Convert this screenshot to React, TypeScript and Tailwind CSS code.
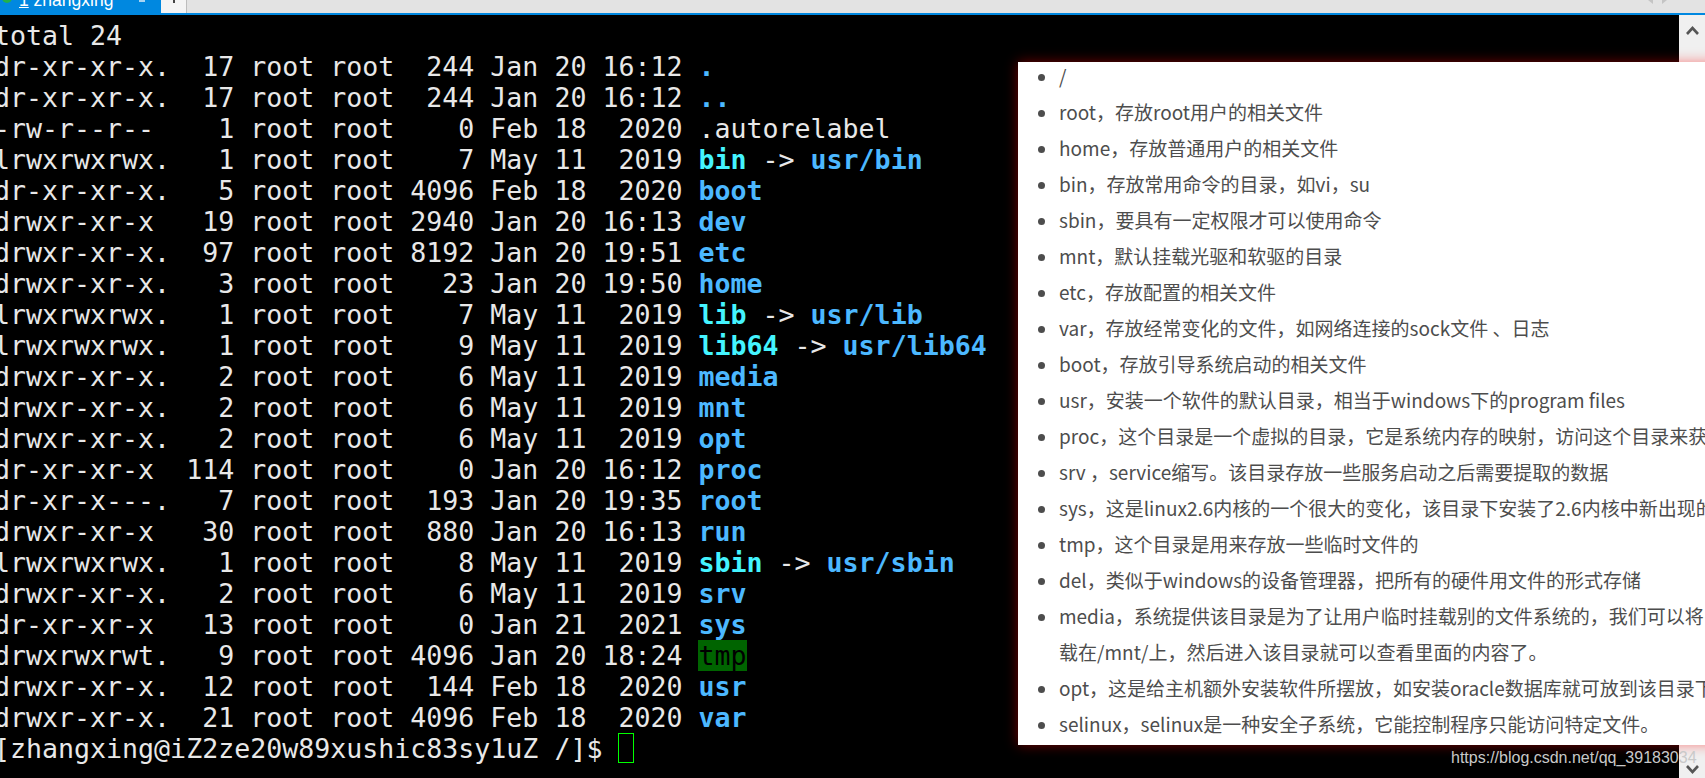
const rows: [string, string, string, string][] = [
  ['dr-xr-xr-x.  17 root root  244 Jan 20 16:12 ', '.', '', ''],
  ['dr-xr-xr-x.  17 root root  244 Jan 20 16:12 ', '..', '', ''],
  ['-rw-r--r--    1 root root    0 Feb 18  2020 ', '', '.autorelabel', ''],
  ['lrwxrwxrwx.   1 root root    7 May 11  2019 ', 'bin', ' -> ', 'usr/bin'],
  ['dr-xr-xr-x.   5 root root 4096 Feb 18  2020 ', 'boot', '', ''],
  ['drwxr-xr-x   19 root root 2940 Jan 20 16:13 ', 'dev', '', ''],
  ['drwxr-xr-x.  97 root root 8192 Jan 20 19:51 ', 'etc', '', ''],
  ['drwxr-xr-x.   3 root root   23 Jan 20 19:50 ', 'home', '', ''],
  ['lrwxrwxrwx.   1 root root    7 May 11  2019 ', 'lib', ' -> ', 'usr/lib'],
  ['lrwxrwxrwx.   1 root root    9 May 11  2019 ', 'lib64', ' -> ', 'usr/lib64'],
  ['drwxr-xr-x.   2 root root    6 May 11  2019 ', 'media', '', ''],
  ['drwxr-xr-x.   2 root root    6 May 11  2019 ', 'mnt', '', ''],
  ['drwxr-xr-x.   2 root root    6 May 11  2019 ', 'opt', '', ''],
  ['dr-xr-xr-x  114 root root    0 Jan 20 16:12 ', 'proc', '', ''],
  ['dr-xr-x---.   7 root root  193 Jan 20 19:35 ', 'root', '', ''],
  ['drwxr-xr-x   30 root root  880 Jan 20 16:13 ', 'run', '', ''],
  ['lrwxrwxrwx.   1 root root    8 May 11  2019 ', 'sbin', ' -> ', 'usr/sbin'],
  ['drwxr-xr-x.   2 root root    6 May 11  2019 ', 'srv', '', ''],
  ['dr-xr-xr-x   13 root root    0 Jan 21  2021 ', 'sys', '', ''],
]

const tail: [string, string][] = [
  ['drwxr-xr-x.  12 root root  144 Feb 18  2020 ', 'usr'],
  ['drwxr-xr-x.  21 root root 4096 Feb 18  2020 ', 'var'],
]

const notes = [
  '/',
  'root，存放root用户的相关文件',
  'home，存放普通用户的相关文件',
  'bin，存放常用命令的目录，如vi，su',
  'sbin，要具有一定权限才可以使用命令',
  'mnt，默认挂载光驱和软驱的目录',
  'etc，存放配置的相关文件',
  'var，存放经常变化的文件，如网络连接的sock文件 、日志',
  'boot，存放引导系统启动的相关文件',
  'usr，安装一个软件的默认目录，相当于windows下的program files',
  'proc，这个目录是一个虚拟的目录，它是系统内存的映射，访问这个目录来获',
  'srv ，service缩写。该目录存放一些服务启动之后需要提取的数据',
  'sys，这是linux2.6内核的一个很大的变化，该目录下安装了2.6内核中新出现的',
  'tmp，这个目录是用来存放一些临时文件的',
  'del，类似于windows的设备管理器，把所有的硬件用文件的形式存储',
  'media，系统提供该目录是为了让用户临时挂载别的文件系统的，我们可以将',
  '载在/mnt/上，然后进入该目录就可以查看里面的内容了。',
  'opt，这是给主机额外安装软件所摆放，如安装oracle数据库就可放到该目录下',
  'selinux，selinux是一种安全子系统，它能控制程序只能访问特定文件。',
]

export default function App() {
  return (
    <div className="relative h-[778px] w-[1705px] overflow-hidden bg-black">
      {/* tab bar */}
      <div className="flex h-[13px] items-start overflow-hidden bg-[#e3e3e3]">
        <div className="flex h-[13px] w-[161px] items-start overflow-hidden bg-[#0088e0] pl-[2px] text-white">
          <span className="mt-[-7px] h-[10px] w-[10px] shrink-0 rounded-full bg-[#22b14c]" />
          <span className="ml-[7px] mt-[-10px] whitespace-nowrap font-['Liberation_Sans',sans-serif] text-[17.5px] leading-[20px]">
            <span className="underline">1</span> zhangxing
          </span>
          <span className="ml-[26px] mt-[-3px] h-[5px] w-[6px] bg-[#a8d4f2]" />
        </div>
        <div className="flex h-[13px] w-[26px] justify-center border-r border-[#bdbdbd] bg-[#f4f4f4]">
          <span className="h-[3px] w-[2px] bg-[#444]" />
        </div>
        <div className="ml-auto mr-[38px] flex gap-[9px] text-[#c4c4c4]">
          <svg width="5" height="4" viewBox="0 0 5 4" fill="currentColor">
            <path d="M0 0h5v4z" />
          </svg>
          <svg width="5" height="4" viewBox="0 0 5 4" fill="currentColor">
            <path d="M0 0h5L0 4z" />
          </svg>
        </div>
      </div>
      <div className="h-[2px] bg-[#0088e0]" />

      {/* terminal */}
      <div className="ml-[-6px] whitespace-pre pt-[5px] font-['DejaVu_Sans_Mono',monospace] text-[26.6px] leading-[31px] text-[#e8e8e8]">
        <div>total 24</div>
        {rows.map((r, i) => (
          <div key={i}>
            {r[0]}
            <span className={r[3] ? 'font-bold text-[#44f4ff]' : 'font-bold text-[#4cb8ff]'}>{r[1]}</span>
            {r[2]}
            <span className="font-bold text-[#4cb8ff]">{r[3]}</span>
          </div>
        ))}
        <div>
          drwxrwxrwt.   9 root root 4096 Jan 20 18:24 <span className="bg-[#006400] text-black">tmp</span>
        </div>
        {tail.map((r, i) => (
          <div key={i}>
            {r[0]}
            <span className="font-bold text-[#4cb8ff]">{r[1]}</span>
          </div>
        ))}
        <div className="flex">
          [zhangxing@iZ2ze20w89xushic83sy1uZ /]$ <span className="h-[30px] w-[16px] border border-[#00ff00]" />
        </div>
      </div>

      {/* scrollbar */}
      <div className="absolute right-0 top-[15px] flex h-[763px] w-[26px] flex-col items-center justify-between bg-[#f0f0f0] pb-[3px] pt-[10px] text-[#555]">
        <svg width="13" height="10" viewBox="0 0 13 10" fill="none" stroke="currentColor" strokeWidth="2.6">
          <path d="M1 9l5.5-6 5.5 6" />
        </svg>
        <svg width="13" height="10" viewBox="0 0 13 10" fill="none" stroke="currentColor" strokeWidth="2.6">
          <path d="M1 1l5.5 6 5.5-6" />
        </svg>
      </div>

      {/* pasted notes */}
      <div className="absolute left-[1018px] top-[62px] h-[683px] w-[720px] overflow-hidden bg-white shadow-[0_0_12px_rgba(255,0,0,0.45)]">
        <ul className="mt-[-4px] list-disc whitespace-nowrap pl-[41px] font-['Noto_Sans_CJK_SC',sans-serif] text-[19px] leading-[36px] text-[#4d4d4d] marker:text-[#4d4d4d]">
          {notes.map((n, i) =>
            i === 16 ? (
              <div key={i}>{n}</div>
            ) : (
              <li key={i}>{n}</li>
            ),
          )}
        </ul>
      </div>

      <div className="absolute left-[1451px] top-[748px] font-['Liberation_Sans',sans-serif] text-[16px] leading-[20px] text-[#c9c9c9]">
        https://blog.csdn.net/qq_39183034
      </div>
    </div>
  )
}
